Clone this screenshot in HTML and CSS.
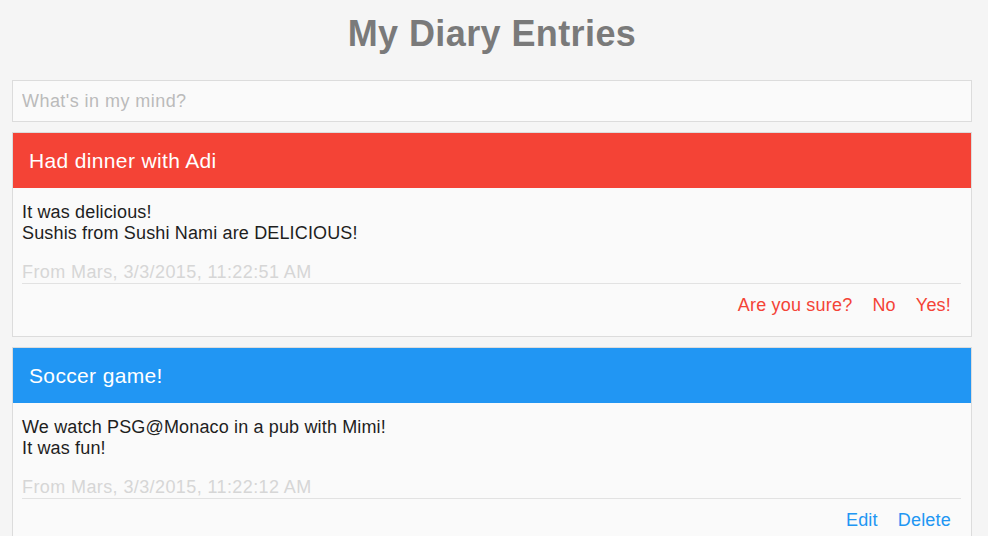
FILE: index.html
```html
<!DOCTYPE html>
<html>
<head>
<meta charset="utf-8">
<link rel="stylesheet" href="styles.css">
</head>
<body>
<div class="page">
  <h1 class="title">My Diary Entries</h1>
  <input class="new-entry" type="text" placeholder="What's in my mind?">
  <div class="card">
    <div class="card-head red">Had dinner with Adi</div>
    <div class="card-body">
      <div class="text">It was delicious!<br>Sushis from Sushi Nami are DELICIOUS!</div>
      <div class="meta">From Mars, 3/3/2015, 11:22:51 AM</div>
      <div class="actions red-text">
        <span>Are you sure?</span><span>No</span><span>Yes!</span>
      </div>
    </div>
  </div>
  <div class="card">
    <div class="card-head blue">Soccer game!</div>
    <div class="card-body">
      <div class="text">We watch PSG@Monaco in a pub with Mimi!<br>It was fun!</div>
      <div class="meta">From Mars, 3/3/2015, 11:22:12 AM</div>
      <div class="actions blue-text">
        <span>Edit</span><span>Delete</span>
      </div>
    </div>
  </div>
</div>
</body>
</html>
```

FILE: styles.css
```css
html, body {
  margin: 0;
  padding: 0;
  background: #f5f5f5;
  font-family: "Liberation Sans", Arial, sans-serif;
}
.page {
  padding: 0 16px 0 12px;
  display: flex;
  flex-direction: column;
}
.title {
  margin: 12px 0 0;
  height: 68px;
  font-size: 36px;
  line-height: 44px;
  font-weight: bold;
  letter-spacing: 0.4px;
  color: #7a7a7a;
  text-align: center;
}
.new-entry {
  box-sizing: border-box;
  width: 100%;
  height: 42px;
  margin: 0 0 10px;
  padding: 0 9px;
  border: 1px solid #dcdcdc;
  background: #fafafa;
  font-family: "Liberation Sans", Arial, sans-serif;
  font-size: 18px;
  letter-spacing: 0.45px;
  color: #333;
  outline: none;
}
.new-entry::placeholder {
  color: #bbbbbb;
}
.card {
  border: 1px solid #dcdcdc;
  background: #fafafa;
  margin-bottom: 10px;
}
.card-head {
  padding: 16px 16px;
  height: 23px;
  font-size: 21px;
  line-height: 23px;
  letter-spacing: 0.35px;
  color: #ffffff;
}
.red { background: #f44336; }
.blue { background: #2196f3; }
.card-body {
  padding: 14px 10px 20px 9px;
}
.text {
  font-size: 18px;
  line-height: 21px;
  letter-spacing: 0.15px;
  color: #1e1e1e;
}
.meta {
  margin-top: 18px;
  font-size: 18px;
  line-height: 21px;
  letter-spacing: 0.4px;
  color: #d6d6d6;
  border-bottom: 1px solid #e2e2e2;
}
.actions {
  margin-top: 11px;
  padding-right: 10px;
  display: flex;
  justify-content: flex-end;
  gap: 20px;
  font-size: 18px;
  line-height: 21px;
  letter-spacing: 0.2px;
}
.red-text { color: #f44336; }
.blue-text { color: #2196f3; }
```
